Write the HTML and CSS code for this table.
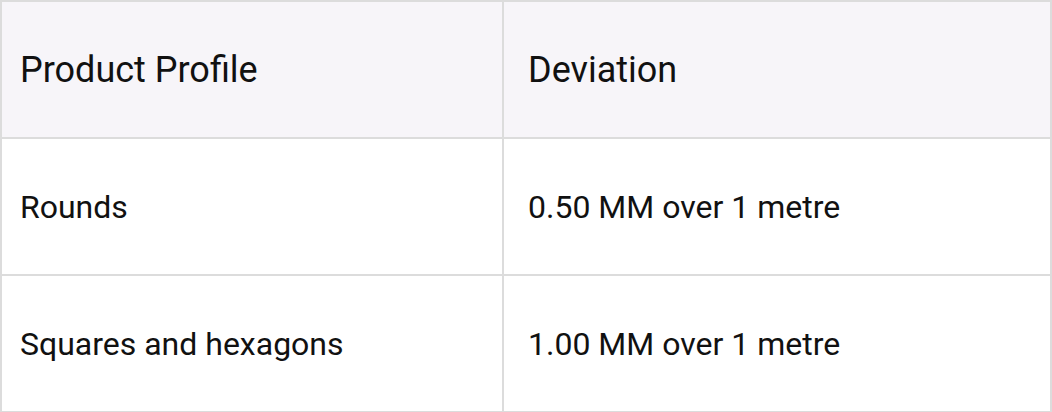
FILE: index.html
```html
<!DOCTYPE html>
<html>
<head>
<meta charset="utf-8">
<link rel="stylesheet" href="styles.css">
</head>
<body>
<table class="spec">
  <thead>
    <tr><th class="c1">Product Profile</th><th class="c2">Deviation</th></tr>
  </thead>
  <tbody>
    <tr><td class="c1">Rounds</td><td class="c2">0.50 MM over 1 metre</td></tr>
    <tr><td class="c1">Squares and hexagons</td><td class="c2">1.00 MM over 1 metre</td></tr>
  </tbody>
</table>
</body>
</html>
```
FILE: styles.css
```css
html, body { margin: 0; padding: 0; background: #fff; }
.spec {
  border-collapse: collapse;
  width: 1052px;
  font-family: Roboto, "Liberation Sans", sans-serif;
  color: #111;
}
.spec th, .spec td {
  border: 2px solid #dcdcdc;
  text-align: left;
  vertical-align: middle;
  box-sizing: border-box;
  padding: 0 18px;
}
.spec th {
  background: #f7f5f9;
  font-weight: 400;
  font-size: 36px;
  height: 137px;
}
.spec td { font-size: 32px; height: 137px; }
.spec .c1 { width: 502px; padding-left: 18px; }
.spec .c2 { padding-left: 24px; }
```
